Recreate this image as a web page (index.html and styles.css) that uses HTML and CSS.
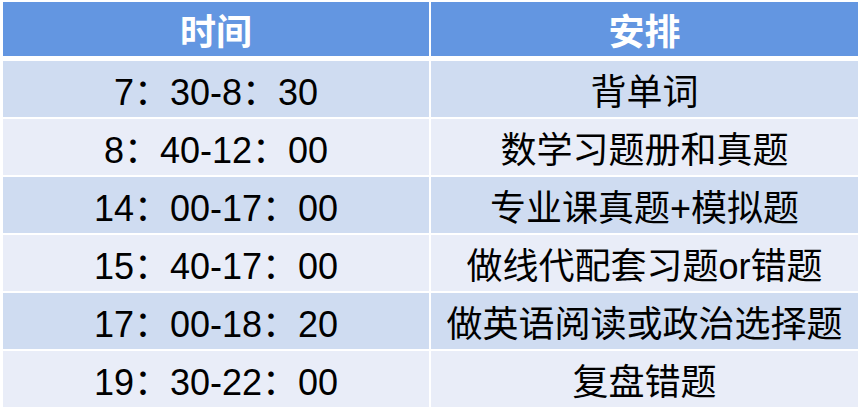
FILE: index.html
```html
<!DOCTYPE html>
<html lang="zh-CN">
<head>
<meta charset="utf-8">
<title>时间安排</title>
<link rel="stylesheet" href="styles.css">
</head>
<body>
<div class="schedule">
  <div class="cell head">时间</div>
  <div class="cell head">安排</div>

  <div class="cell odd">7：30-8：30</div>
  <div class="cell odd">背单词</div>

  <div class="cell even">8：40-12：00</div>
  <div class="cell even">数学习题册和真题</div>

  <div class="cell odd">14：00-17：00</div>
  <div class="cell odd">专业课真题+模拟题</div>

  <div class="cell even">15：40-17：00</div>
  <div class="cell even">做线代配套习题or错题</div>

  <div class="cell odd">17：00-18：20</div>
  <div class="cell odd">做英语阅读或政治选择题</div>

  <div class="cell even">19：30-22：00</div>
  <div class="cell even">复盘错题</div>
</div>
</body>
</html>
```

FILE: styles.css
```css
html, body {
  margin: 0;
  background: #ffffff;
}

body {
  padding: 2px 3px;
  font-family: "Liberation Sans", Arial, "Noto Sans CJK SC", sans-serif;
}

.schedule {
  display: grid;
  grid-template-columns: 426px 427px;
  grid-template-rows: 57px repeat(6, 56px);
  column-gap: 2px;
  row-gap: 2px;
}

.cell {
  display: flex;
  align-items: center;
  justify-content: center;
  font-size: 36px;
  color: #000000;
  white-space: nowrap;
}

.head {
  background: #6396e1;
  color: #ffffff;
  font-weight: bold;
  font-family: "Noto Sans CJK SC", sans-serif;
  margin-bottom: 3px;
}

.odd {
  background: #cfdcf1;
}

.even {
  background: #e9edf8;
}
```
